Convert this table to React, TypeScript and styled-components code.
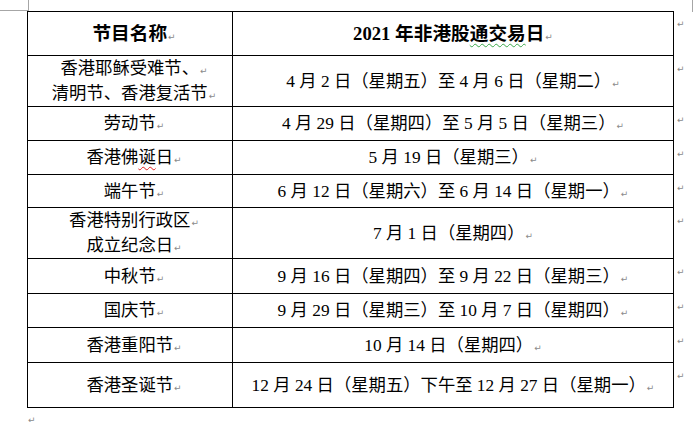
import React from "react";
import styled, { createGlobalStyle } from "styled-components";

const Global = createGlobalStyle`
  html, body { margin: 0; padding: 0; background: #ffffff; }
  body { font-family: "Liberation Serif", "Noto Sans CJK SC", serif; color: #000; }
`;

const Page = styled.div`
  position: relative;
  width: 693px;
  height: 422px;
  overflow: hidden;
  box-sizing: border-box;
  padding: 11px 0 0 27px;
  background: #fff;
`;

const CropMark = styled.div<{ $side: "left" | "right" }>`
  position: absolute;
  top: 0;
  ${(p) => (p.$side === "left" ? "left: 0; width: 29px;" : "left: 692px; width: 10px;")}
  height: ${(p) => (p.$side === "left" ? "11px" : "12px")};
  box-sizing: border-box;
  border-color: #a6a6a6;
  border-style: solid;
  border-width: ${(p) => (p.$side === "left" ? "0 1px 1px 0" : "0 0 0 1px")};
`;

const Table = styled.div`
  display: flex;
  flex-direction: column;
`;

const Row = styled.div<{ $h: number }>`
  display: grid;
  grid-template-columns: 206px 441px 20px;
  height: ${(p) => p.$h}px;
`;

const Cell = styled.div<{ $first?: boolean; $top?: boolean; $head?: boolean }>`
  box-sizing: border-box;
  display: flex;
  flex-direction: column;
  justify-content: center;
  align-items: stretch;
  border-right: 1px solid #000;
  border-bottom: 1px solid #000;
  border-left: ${(p) => (p.$first ? "1px solid #000" : "none")};
  border-top: ${(p) => (p.$top ? "1px solid #000" : "none")};
  padding-left: ${(p) => (p.$first ? "8px" : "0")};
  font-size: ${(p) => (p.$head ? "18.67px" : "17.33px")};
  font-weight: ${(p) => (p.$head ? 700 : 400)};
  white-space: nowrap;
`;

const Line = styled.div`
  text-align: center;
  line-height: 25px;
  height: 25px;
`;

const Mark = styled.span`
  font-family: "DejaVu Sans", sans-serif;
  font-weight: 400;
  font-size: 9px;
  line-height: 1;
  color: #8a8a8a;
  margin-left: 1px;
`;

const RowEnd = styled.div`
  font-family: "DejaVu Sans", sans-serif;
  font-size: 9px;
  line-height: 12px;
  color: #8a8a8a;
  padding: 7px 0 0 3px;
`;

const Squiggle = styled.span<{ $c: string }>`
  text-decoration: underline wavy ${(p) => p.$c};
  text-decoration-thickness: 1px;
  text-underline-offset: 3px;
`;

const After = styled.div`
  font-family: "DejaVu Sans", sans-serif;
  font-size: 9px;
  line-height: 12px;
  color: #8a8a8a;
  margin-top: 6px;
  padding-left: 1px;
`;

type Part = string | { t: string; c: string };
type RowData = { name: Part[][]; date: Part[][]; h: number };

const rows: RowData[] = [
  { name: [["香港耶稣受难节、"], ["清明节、香港复活节"]], date: [["4 月 2 日（星期五）至 4 月 6 日（星期二）"]], h: 51 },
  { name: [["劳动节"]], date: [["4 月 29 日（星期四）至 5 月 5 日（星期三）"]], h: 34 },
  { name: [["香港佛", { t: "诞", c: "#e02020" }, "日"]], date: [["5 月 19 日（星期三）"]], h: 34 },
  { name: [["端午节"]], date: [["6 月 12 日（星期六）至 6 月 14 日（星期一）"]], h: 33 },
  { name: [["香港特别行政区"], ["成立纪念日"]], date: [["7 月 1 日（星期四）"]], h: 51 },
  { name: [["中秋节"]], date: [["9 月 16 日（星期四）至 9 月 22 日（星期三）"]], h: 35 },
  { name: [["国庆节"]], date: [["9 月 29 日（星期三）至 10 月 7 日（星期四）"]], h: 34 },
  { name: [["香港重阳节"]], date: [["10 月 14 日（星期四）"]], h: 35 },
  { name: [["香港圣诞节"]], date: [["12 月 24 日（星期五）下午至 12 月 27 日（星期一）"]], h: 45 },
];

const renderLines = (lines: Part[][]) =>
  lines.map((parts, i) => (
    <Line key={i}>
      {parts.map((p, j) =>
        typeof p === "string" ? (
          <React.Fragment key={j}>{p}</React.Fragment>
        ) : (
          <Squiggle key={j} $c={p.c}>
            {p.t}
          </Squiggle>
        )
      )}
      <Mark>↵</Mark>
    </Line>
  ));

export default function App() {
  return (
    <>
      <Global />
      <Page>
        <CropMark $side="left" />
        <CropMark $side="right" />
        <Table>
          <Row $h={45}>
            <Cell $first $top $head>
              {renderLines([["节目名称"]])}
            </Cell>
            <Cell $top $head>
              {renderLines([["2021 年非港股", { t: "通交易", c: "#3aa84a" }, "日"]])}
            </Cell>
            <RowEnd>↵</RowEnd>
          </Row>
          {rows.map((r, i) => (
            <Row key={i} $h={r.h}>
              <Cell $first>{renderLines(r.name)}</Cell>
              <Cell>{renderLines(r.date)}</Cell>
              <RowEnd>↵</RowEnd>
            </Row>
          ))}
        </Table>
        <After>↵</After>
      </Page>
    </>
  );
}
